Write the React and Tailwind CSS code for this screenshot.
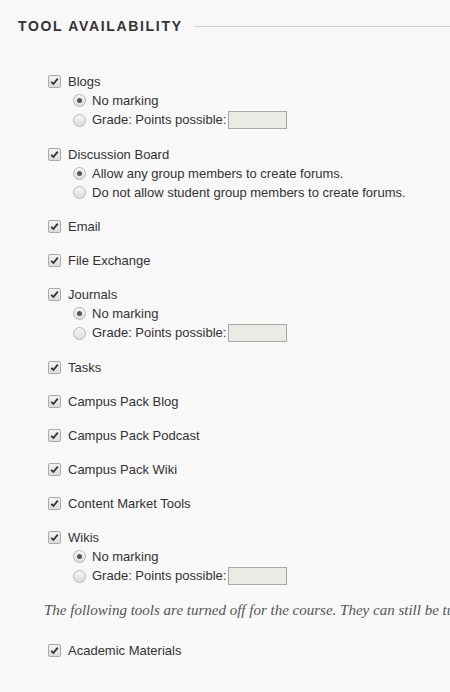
import React from 'react';

const tools = [
  { name: 'Blogs', options: ['No marking', 'grade'] },
  { name: 'Discussion Board', options: ['Allow any group members to create forums.', 'Do not allow student group members to create forums.'] },
  { name: 'Email' },
  { name: 'File Exchange' },
  { name: 'Journals', options: ['No marking', 'grade'] },
  { name: 'Tasks' },
  { name: 'Campus Pack Blog' },
  { name: 'Campus Pack Podcast' },
  { name: 'Campus Pack Wiki' },
  { name: 'Content Market Tools' },
  { name: 'Wikis', options: ['No marking', 'grade'] },
];

const Check = () => (
  <span className="w-[13px] h-[13px] border border-[#a9a9a9] rounded-[2px] bg-gradient-to-b from-[#f4f4f4] to-[#dcdcdc] flex items-center justify-center shrink-0">
    <svg width="9" height="9" viewBox="0 0 9 9">
      <path d="M1.2 4.8 L3.4 7 L7.8 1.6" fill="none" stroke="#333" strokeWidth="1.8" />
    </svg>
  </span>
);

const Radio = ({ on }) => (
  <span className="w-[13px] h-[13px] rounded-full border border-[#b5b5b5] bg-gradient-to-b from-[#f6f6f6] to-[#dedede] flex items-center justify-center shrink-0">
    {on && <span className="w-[5px] h-[5px] rounded-full bg-[#555]" />}
  </span>
);

const ToolRow = ({ tool }) => (
  <div className="mb-[15px]">
    <label className="flex items-center h-[19px] gap-[7px] pl-[48px]">
      <Check />
      <span>{tool.name}</span>
    </label>
    {tool.options && tool.options.map((opt, i) => (
      <label key={i} className={`flex items-center gap-[6px] pl-[73px] ${opt === 'grade' ? 'h-[20px]' : 'h-[19px]'}`}>
        <Radio on={i === 0} />
        {opt === 'grade' ? (
          <span className="flex items-center gap-[2px]">
            Grade: Points possible:
            <span className="w-[59px] h-[18px] border border-[#a8a8a8] bg-[#ebeae4] inline-block" />
          </span>
        ) : (
          <span>{opt}</span>
        )}
      </label>
    ))}
  </div>
);

export default function App() {
  return (
    <div className="w-[450px] h-[692px] overflow-hidden bg-[#f8f8f8] text-[#333] text-[13px] font-['Liberation_Sans',Arial,sans-serif]">
      <div className="flex items-center pt-[17px] pl-[18px]">
        <h2 className="font-bold text-[14px] tracking-[0.12em] text-[#333] whitespace-nowrap leading-[18px]">TOOL AVAILABILITY</h2>
        <div className="flex-1 h-px bg-[#cfcfcf] ml-[11px]" />
      </div>
      <div className="pt-[37px]">
        {tools.map((t) => <ToolRow key={t.name} tool={t} />)}
      </div>
      <p className="pl-[44px] -mt-[1px] whitespace-nowrap italic text-[15px] text-[#555] font-['Liberation_Serif',Georgia,serif] leading-[20px]">
        The following tools are turned off for the course. They can still be tu
      </p>
      <div className="pt-[21px]">
        <label className="flex items-center h-[19px] gap-[7px] pl-[48px]">
          <Check />
          <span>Academic Materials</span>
        </label>
      </div>
    </div>
  );
}
